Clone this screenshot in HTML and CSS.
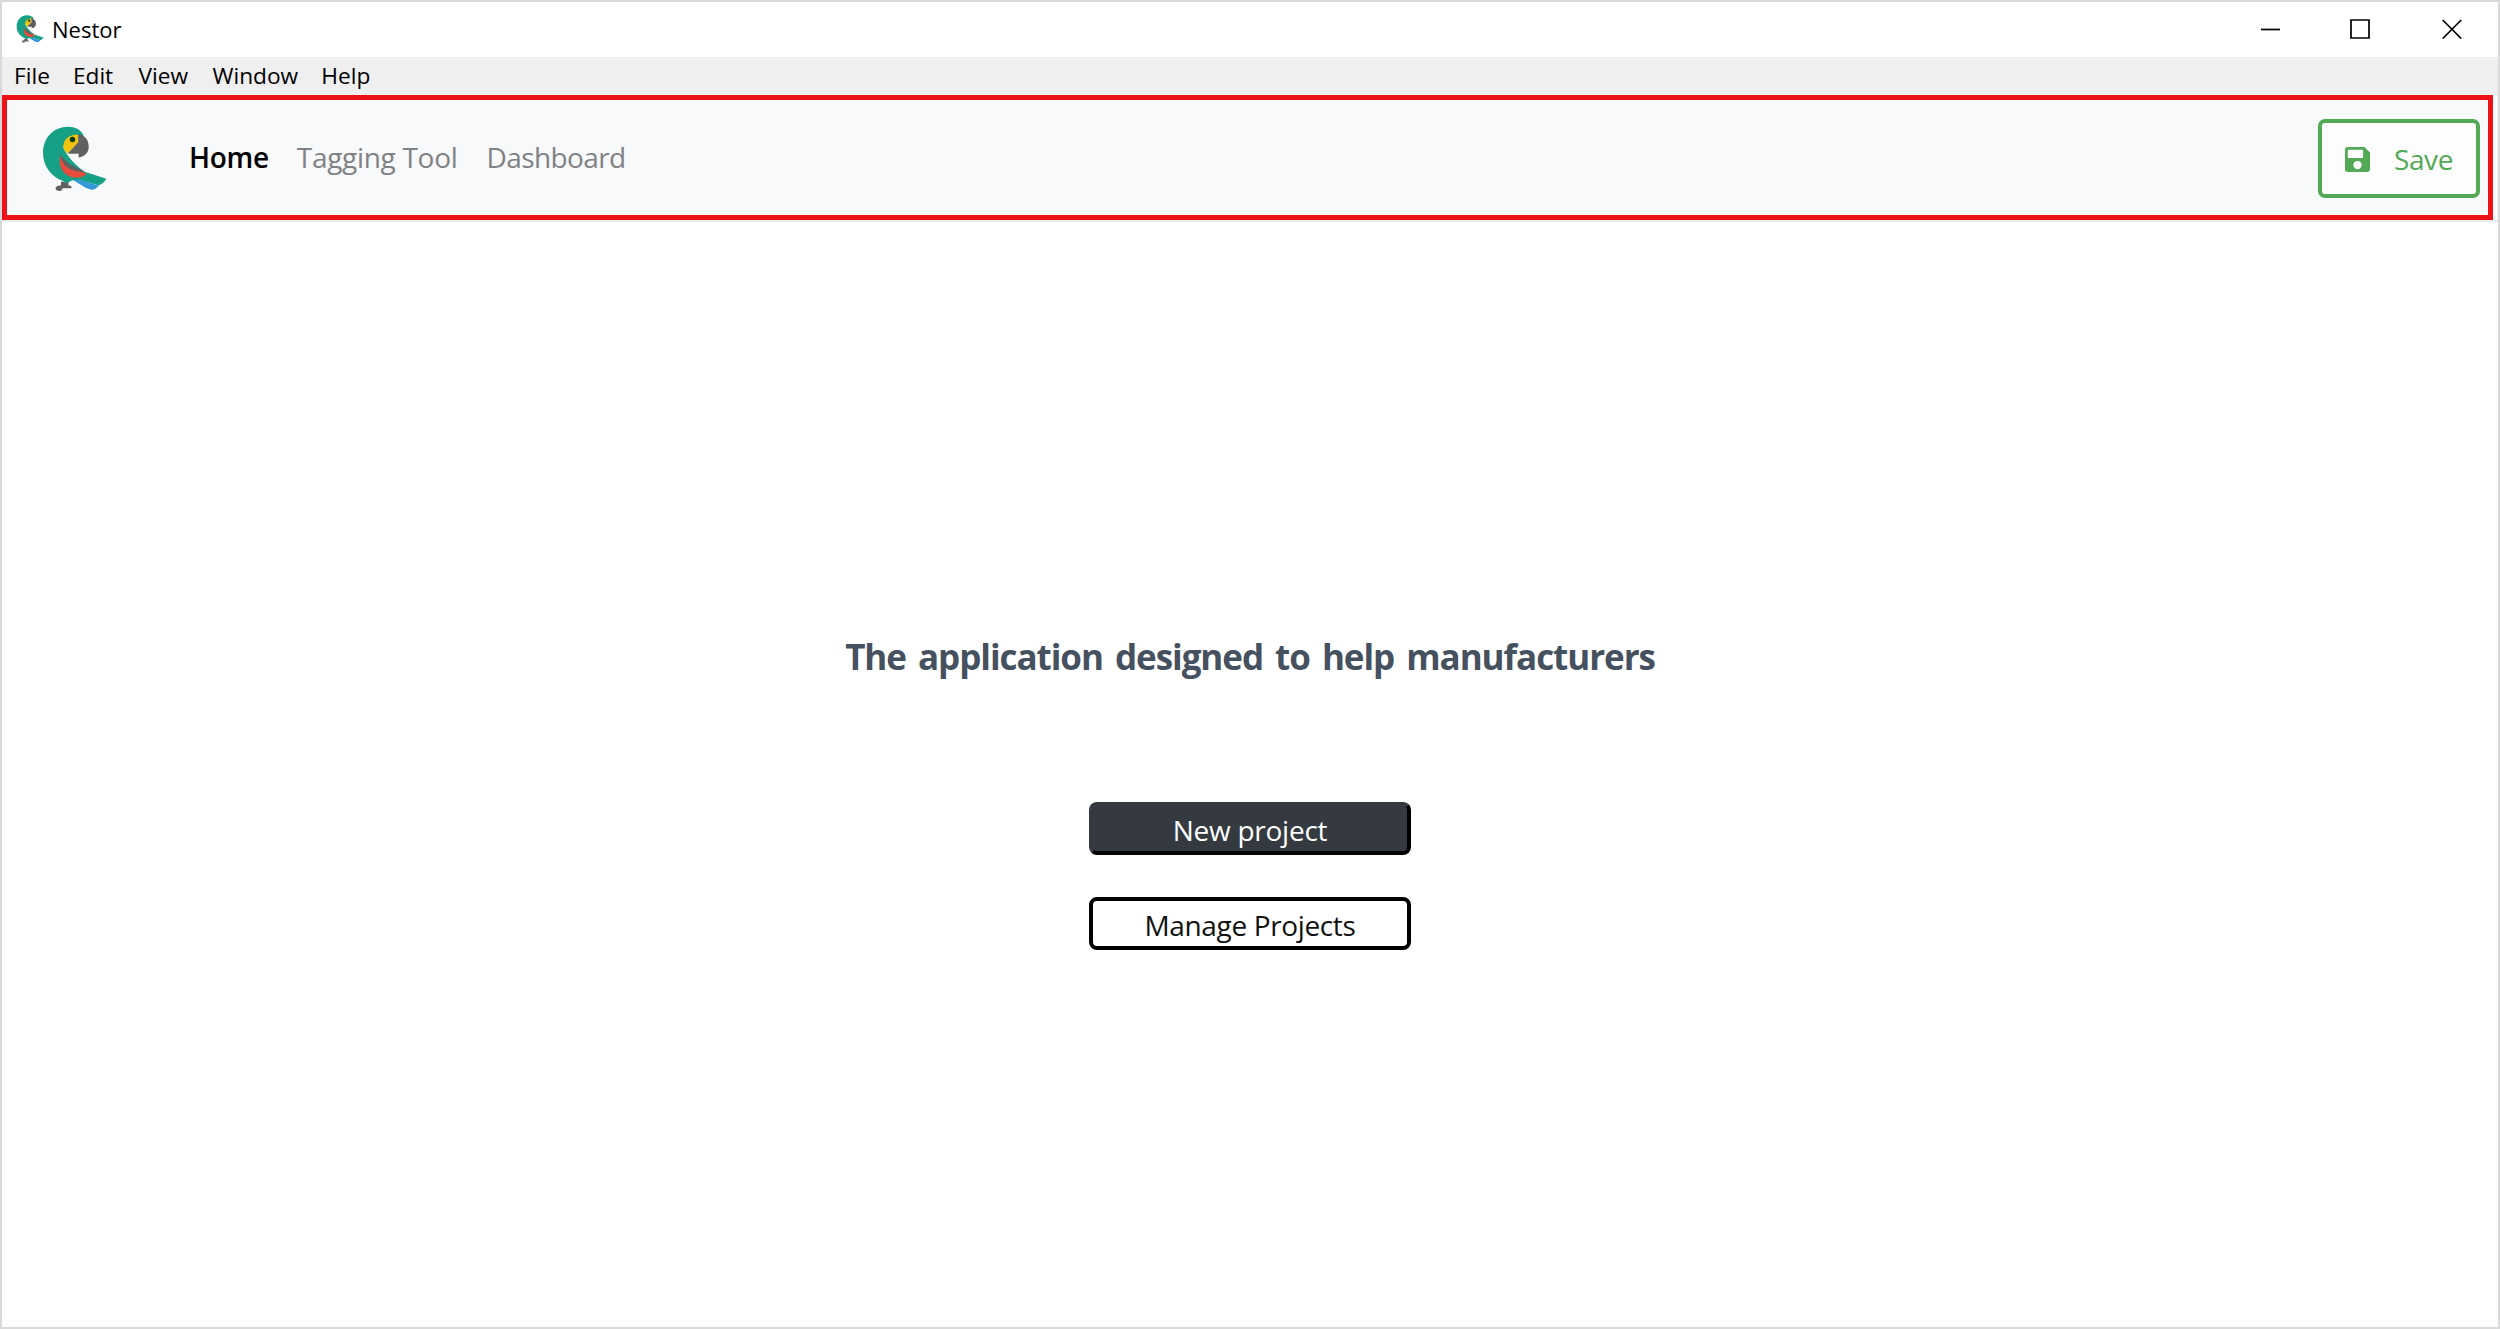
FILE: index.html
```html
<!DOCTYPE html>
<html lang="en">
<head>
<meta charset="utf-8">
<title>Nestor</title>
<link rel="stylesheet" href="styles.css">
</head>
<body>
<svg class="defs" width="0" height="0" aria-hidden="true">
  <symbol id="parrot" viewBox="36 33 192 195">
    <path fill="#606060" d="M92 198h22v10q8 0 10 6l-2 3H97l-4 7q-6 2-14-1l-3-4 1-6q5-4 15-4z"/>
    <path fill="#3498db" d="M124 190l80 20-12 9q-14 4-28-4z"/>
    <path fill="#16a085" d="M159 60C150 43 134 35 113 35C70 35 39 68 39 112c0 42 26 72 62 85l1 4h10l14-8 26 1 52 15c11-6 18-12 22-20l-64-21C138 152 112 126 98 95z"/>
    <path fill="#3498db" d="M128 192l24 1 50 16-10 10q-14 4-26-4z"/>
    <path fill="#606060" d="M91 119c14 22 38 34 63 44l8 6-22 9c-30-2-50-24-49-59z"/>
    <path fill="#e74c3c" d="M89 118c6 30 26 48 62 50l17 6c-10 12-32 15-50 8-22-9-34-31-29-64z"/>
    <path fill="#f1c40f" d="M143 58c-24 0-44 13-44 34q0 12 13 22l31-32z"/>
    <path fill="#606060" d="M143 57c20 4 31 18 31 37 0 17-10 28-30 32v-12q-17 2-32 0l31-33z"/>
    <circle cx="126" cy="73" r="8" fill="#083a10"/>
  </symbol>
</svg>
<div class="window">
  <header class="titlebar">
    <svg class="titlebar-icon"><use href="#parrot"/></svg>
    <span class="titlebar-name">Nestor</span>
    <div class="controls">
      <svg width="20" height="20" viewBox="0 0 20 20"><path d="M1 10.5h19"/></svg>
      <svg class="maximize" width="20" height="20" viewBox="0 0 20 20"><path d="M1 1h18v18H1z"/></svg>
      <svg width="20" height="20" viewBox="0 0 20 20"><path d="M.7 1l18.5 18.5M19.2 1L.7 19.5"/></svg>
    </div>
  </header>
  <nav class="menubar">
    <span>File</span><span class="menu-edit">Edit</span><span class="menu-view">View</span><span>Window</span><span>Help</span>
  </nav>
  <div class="toolbar">
    <div class="highlight">
      <svg class="logo"><use href="#parrot"/></svg>
      <nav class="links">
        <a class="link-home">Home</a><a class="link-tagging">Tagging Tool</a><a class="link-dashboard">Dashboard</a>
      </nav>
      <button class="save">
        <svg class="save-icon" viewBox="3 3 18 18"><path d="M17 3H5a2 2 0 0 0-2 2v14a2 2 0 0 0 2 2h14c1.1 0 2-.9 2-2V7zm-5 16a3 3 0 1 1 0-6 3 3 0 0 1 0 6zm4-8H5V5h11z"/></svg>
        <span>Save</span>
      </button>
    </div>
  </div>
  <main class="home">
    <h1>The application designed to help manufacturers</h1>
    <button class="btn btn-dark">New project</button>
    <button class="btn btn-light">Manage Projects</button>
  </main>
</div>
</body>
</html>
```
FILE: styles.css
```css
* { box-sizing: border-box; }
body { margin: 0; font-family: "Open Sans", "Noto Sans", sans-serif; background: #fff; color: #000; }
.defs { position: absolute; }
.window { height: 1329px; border: 2px solid #d9d9d9; display: flex; flex-direction: column; }
.titlebar { height: 55px; display: flex; align-items: center; padding: 0 36px 0 14px; font-size: 22px; }
.titlebar-icon { width: 28px; height: 28px; margin: -1px 8px 0 0; }
.titlebar-name { margin-top: -1px; }
.controls { margin-left: auto; display: flex; gap: 71px; }
.controls svg { fill: none; stroke: #000; stroke-width: 1.7; margin-top: -1px; }
.controls .maximize { margin-left: -1px; margin-right: 1px; }
.menubar { height: 38px; background: #efefef; display: flex; font-size: 22.7px; line-height: 38px; padding-left: 12px; gap: 23px; }
.menu-edit { margin-right: 2.2px; }
.menu-view { margin-right: 1.5px; }
.toolbar { height: 127px; background: #f8f9fb; border-bottom: 2px solid #e7eaf0; padding-right: 5px; }
.highlight { height: 125px; border: 5px solid #ed1118; display: flex; align-items: center; padding: 0 8px 0 35px; }
.logo { width: 65px; height: 66px; margin-top: 2px; }
.links { display: flex; margin: -1px 0 0 82px; font-size: 28px; font-weight: 380; color: #808184; }
.link-home { color: #000; font-weight: 600; letter-spacing: -.3px; }
.link-tagging { margin-left: 28px; letter-spacing: -.3px; }
.link-dashboard { margin-left: 29px; letter-spacing: -.6px; }
.save { margin: 2px 0 0 auto; width: 162px; height: 79px; border: 4px solid #53a955; border-radius: 7px; background: #fdfdfe; color: #53a955; font: 380 28px "Open Sans", sans-serif; letter-spacing: -.4px; display: flex; align-items: center; padding: 0 0 0 23px; }
.save span { margin-top: 1px; }
.save-icon { width: 25px; height: 25px; fill: #53a955; margin: 1px 24px 0 0; }
.home { display: flex; flex-direction: column; align-items: center; }
h1 { margin: 410px 0 0; font-size: 35px; line-height: 50px; letter-spacing: -1.05px; word-spacing: 4px; color: #46515f; }
.btn { width: 322px; height: 53px; border-radius: 8px; border: 4px solid #000; font: 28px "Open Sans", sans-serif; padding: 2px 0 0; }
.btn-dark { margin-top: 120px; background: #343a40; color: #fff; border-color: #343a40 #000 #000 #343a40; letter-spacing: -.25px; }
.btn-light { margin-top: 42px; background: #fff; color: #111; font-weight: 380; letter-spacing: -.36px; }
```
